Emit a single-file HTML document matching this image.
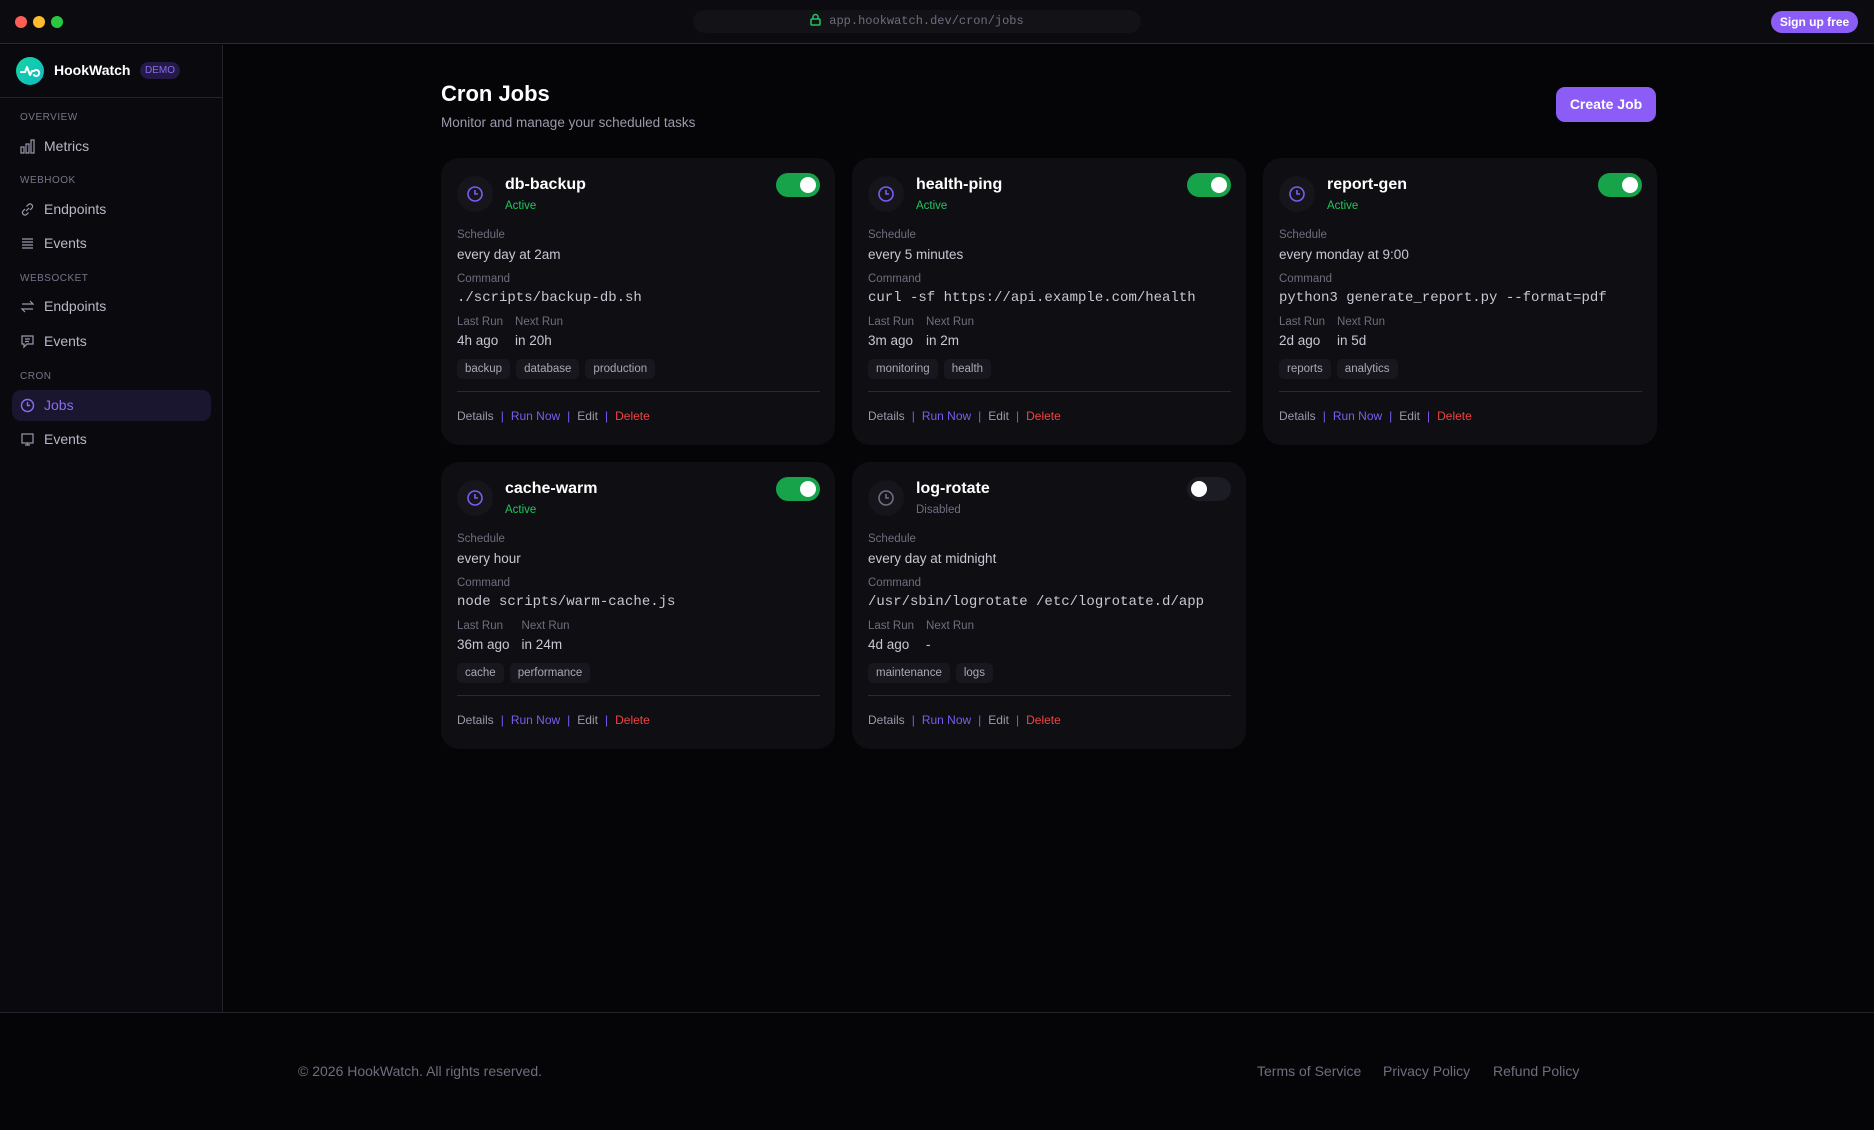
<!DOCTYPE html>
<html><head><meta charset="utf-8"><style>
*{box-sizing:border-box;margin:0;padding:0}
body{width:1874px;height:1130px;background:#050507;font-family:"Liberation Sans",sans-serif;color:#e8e8ee;position:relative;overflow:hidden}
.top{position:absolute;left:0;top:0;width:1874px;height:44px;background:#0c0c10;border-bottom:1px solid #2a2a30}
.dot{position:absolute;top:16px;width:12px;height:12px;border-radius:50%}
.url{position:absolute;left:693px;top:10px;width:448px;height:23px;border-radius:12px;background:#121217;font-family:"Liberation Mono",monospace;font-size:12px;color:#6e6e80;text-align:center;line-height:23px}
.signup{position:absolute;left:1771px;top:11px;width:87px;height:22px;border-radius:11px;background:#8b5cf6;color:#fff;font-size:12px;font-weight:bold;text-align:center;line-height:22px}
.side{position:absolute;left:0;top:45px;width:223px;height:968px;background:#0a0a0e;border-right:1px solid #222228}
.logo{position:absolute;left:16px;top:57px;width:28px;height:28px;border-radius:50%;background:linear-gradient(135deg,#14d6a0,#0fb9c6)}
.brand{position:absolute;left:54px;top:62px;font-size:14px;font-weight:bold;color:#fff}
.demo{position:absolute;left:140px;top:62px;width:40px;height:17px;border-radius:9px;background:#231a45;color:#8b6cf0;font-size:10px;text-align:center;line-height:17px}
.sdiv{position:absolute;left:0;top:97px;width:223px;height:1px;background:#24242a}
.lab{position:absolute;left:20px;font-size:10px;color:#75758a;letter-spacing:.5px}
.nav{position:absolute;left:44px;font-size:14px;color:#b8b8c6}
.ico{position:absolute;left:20px;width:15px;height:15px}
.active{position:absolute;left:12px;top:390px;width:199px;height:31px;border-radius:9px;background:#1a1630}
.foot{position:absolute;left:0;top:1012px;width:1874px;height:1px;background:#24242a}
.ft{position:absolute;top:1063px;font-size:14px;color:#6e6e80}
h1{position:absolute;left:441px;top:81px;font-size:22px;font-weight:bold;color:#fff}
.sub{position:absolute;left:441px;top:115px;font-size:13.5px;color:#9a9aac}
.create{position:absolute;left:1556px;top:87px;width:100px;height:35px;border-radius:9px;background:#8b5cf6;color:#fff;font-size:14px;font-weight:bold;text-align:center;line-height:35px}
.card{position:absolute;width:394px;height:287px;border-radius:18px;background:#0e0e13}
.card>*{position:absolute}
.ci{left:16px;top:18px;width:36px;height:36px;border-radius:50%;background:#15151b}
.ci svg{position:absolute;left:9px;top:9px}
.tt{left:64px;top:18px;font-size:16px;font-weight:bold;color:#fff}
.st{left:64px;top:42px;font-size:11.5px;color:#22c55e}
.tg{right:15px;top:15px;width:44px;height:24px;border-radius:12px;background:#16a34a}
.tg i{position:absolute;top:4px;right:4px;width:16px;height:16px;border-radius:50%;background:#fff}
.tg.off{background:#1c1c24}.tg.off i{right:auto;left:4px}
.l{font-size:11.5px;color:#6e6e80}
.v{font-size:13.5px;color:#c8c8d4}
.m{font-family:"Liberation Mono",monospace;font-size:14px;color:#c8c8d4}
.runs{left:16px;top:158px;display:flex;gap:12px}
.runs div{display:flex;flex-direction:column;gap:5px}
.tags{left:16px;top:201px;display:flex;gap:6px}
.tags span{height:20px;padding:0 8px;border-radius:5px;background:#17171d;font-size:11.5px;color:#a8a8b8;line-height:20px}
.hr{left:16px;right:15px;top:233px;height:1px;background:#2a2a32}
.act{left:16px;top:251px;font-size:12px;color:#9a9aac;white-space:nowrap}
.act b{font-weight:normal;color:#7c5cf0}.act em{font-style:normal;color:#ef4444}.act s{text-decoration:none;color:#7c5cf0;margin:0 7px}
</style></head><body>
<div class="top">
<div class="dot" style="left:15px;background:#ff5f57"></div><div class="dot" style="left:33px;background:#febc2e"></div><div class="dot" style="left:51px;background:#28c840"></div>
<div class="url"><svg width="11" height="13" viewBox="0 0 11 13" style="vertical-align:-2px;margin-right:8px"><rect x="1" y="6" width="9" height="6" rx="1" fill="none" stroke="#22c55e" stroke-width="1.5"/><path d="M3 6V4a2.5 2.5 0 0 1 5 0v2" fill="none" stroke="#22c55e" stroke-width="1.5"/></svg>app.hookwatch.dev/cron/jobs</div>
<div class="signup">Sign up free</div>
</div>
<div class="side"></div>
<div class="logo"><svg width="28" height="28" viewBox="0 0 28 28"><path d="M5 15h4l2-5 3 8 2-4h2a3 3 0 1 1 0 4" fill="none" stroke="#fff" stroke-width="2" stroke-linecap="round" stroke-linejoin="round"/></svg></div>
<div class="brand">HookWatch</div><div class="demo">DEMO</div>
<div class="sdiv"></div>
<div class="lab" style="top:112px">OVERVIEW</div>
<svg class="ico" style="top:139px" viewBox="0 0 15 15" fill="none" stroke="#9a9aac" stroke-width="1.2"><rect x="1" y="8" width="3" height="6"/><rect x="6" y="5" width="3" height="9"/><rect x="11" y="1" width="3" height="13"/></svg>
<div class="nav" style="top:138px">Metrics</div>
<div class="lab" style="top:175px">WEBHOOK</div>
<svg class="ico" style="top:202px" viewBox="0 0 15 15" fill="none" stroke="#9a9aac" stroke-width="1.2"><path d="M6 9l3-3M5 7L3 9a2.5 2.5 0 0 0 3.5 3.5L8.5 10.5M10 8l2-2A2.5 2.5 0 0 0 8.5 2.5L6.5 4.5"/></svg>
<div class="nav" style="top:201px">Endpoints</div>
<svg class="ico" style="top:236px" viewBox="0 0 15 15" fill="none" stroke="#9a9aac" stroke-width="1.2"><path d="M2 3h11M2 6h11M2 9h11M2 12h11"/></svg>
<div class="nav" style="top:235px">Events</div>
<div class="lab" style="top:273px">WEBSOCKET</div>
<svg class="ico" style="top:299px" viewBox="0 0 15 15" fill="none" stroke="#9a9aac" stroke-width="1.2"><path d="M2 5h11l-3-3M13 10H2l3 3"/></svg>
<div class="nav" style="top:298px">Endpoints</div>
<svg class="ico" style="top:334px" viewBox="0 0 15 15" fill="none" stroke="#9a9aac" stroke-width="1.2"><path d="M2 2h11v8H7l-3 3v-3H2z M5 5h5M5 7.5h4"/></svg>
<div class="nav" style="top:333px">Events</div>
<div class="lab" style="top:371px">CRON</div>
<div class="active"></div>
<svg class="ico" style="top:398px" viewBox="0 0 15 15" fill="none" stroke="#8b6cf0" stroke-width="1.4"><circle cx="7.5" cy="7.5" r="6"/><path d="M7.5 4v3.5h2.5"/></svg>
<div class="nav" style="top:397px;color:#8b6cf0">Jobs</div>
<svg class="ico" style="top:432px" viewBox="0 0 15 15" fill="none" stroke="#9a9aac" stroke-width="1.2"><rect x="2" y="2" width="11" height="9"/><path d="M5 13h5M7.5 11v2"/></svg>
<div class="nav" style="top:431px">Events</div>

<h1>Cron Jobs</h1>
<div class="sub">Monitor and manage your scheduled tasks</div>
<div class="create">Create Job</div>

<div class="card" style="left:441px;top:158px">
<div class="ci"><svg width="18" height="18" viewBox="0 0 18 18" fill="none" stroke="#7c5cf0" stroke-width="1.6"><circle cx="9" cy="9" r="7"/><path d="M9 5v4h3"/></svg></div>
<div class="tt">db-backup</div><div class="st">Active</div><div class="tg"><i></i></div>
<div class="l" style="left:16px;top:71px">Schedule</div><div class="v" style="left:16px;top:89px">every day at 2am</div>
<div class="l" style="left:16px;top:115px">Command</div><div class="m" style="left:16px;top:132px">./scripts/backup-db.sh</div>
<div class="runs"><div><span class="l">Last Run</span><span class="v">4h ago</span></div><div><span class="l">Next Run</span><span class="v">in 20h</span></div></div>
<div class="tags"><span>backup</span><span>database</span><span>production</span></div>
<div class="hr"></div>
<div class="act">Details<s>|</s><b>Run Now</b><s>|</s>Edit<s>|</s><em>Delete</em></div>
</div>

<div class="card" style="left:852px;top:158px">
<div class="ci"><svg width="18" height="18" viewBox="0 0 18 18" fill="none" stroke="#7c5cf0" stroke-width="1.6"><circle cx="9" cy="9" r="7"/><path d="M9 5v4h3"/></svg></div>
<div class="tt">health-ping</div><div class="st">Active</div><div class="tg"><i></i></div>
<div class="l" style="left:16px;top:71px">Schedule</div><div class="v" style="left:16px;top:89px">every 5 minutes</div>
<div class="l" style="left:16px;top:115px">Command</div><div class="m" style="left:16px;top:132px">curl -sf https://api.example.com/health</div>
<div class="runs"><div><span class="l">Last Run</span><span class="v">3m ago</span></div><div><span class="l">Next Run</span><span class="v">in 2m</span></div></div>
<div class="tags"><span>monitoring</span><span>health</span></div>
<div class="hr"></div>
<div class="act">Details<s>|</s><b>Run Now</b><s>|</s>Edit<s>|</s><em>Delete</em></div>
</div>

<div class="card" style="left:1263px;top:158px">
<div class="ci"><svg width="18" height="18" viewBox="0 0 18 18" fill="none" stroke="#7c5cf0" stroke-width="1.6"><circle cx="9" cy="9" r="7"/><path d="M9 5v4h3"/></svg></div>
<div class="tt">report-gen</div><div class="st">Active</div><div class="tg"><i></i></div>
<div class="l" style="left:16px;top:71px">Schedule</div><div class="v" style="left:16px;top:89px">every monday at 9:00</div>
<div class="l" style="left:16px;top:115px">Command</div><div class="m" style="left:16px;top:132px">python3 generate_report.py --format=pdf</div>
<div class="runs"><div><span class="l">Last Run</span><span class="v">2d ago</span></div><div><span class="l">Next Run</span><span class="v">in 5d</span></div></div>
<div class="tags"><span>reports</span><span>analytics</span></div>
<div class="hr"></div>
<div class="act">Details<s>|</s><b>Run Now</b><s>|</s>Edit<s>|</s><em>Delete</em></div>
</div>

<div class="card" style="left:441px;top:462px">
<div class="ci"><svg width="18" height="18" viewBox="0 0 18 18" fill="none" stroke="#7c5cf0" stroke-width="1.6"><circle cx="9" cy="9" r="7"/><path d="M9 5v4h3"/></svg></div>
<div class="tt">cache-warm</div><div class="st">Active</div><div class="tg"><i></i></div>
<div class="l" style="left:16px;top:71px">Schedule</div><div class="v" style="left:16px;top:89px">every hour</div>
<div class="l" style="left:16px;top:115px">Command</div><div class="m" style="left:16px;top:132px">node scripts/warm-cache.js</div>
<div class="runs"><div><span class="l">Last Run</span><span class="v">36m ago</span></div><div><span class="l">Next Run</span><span class="v">in 24m</span></div></div>
<div class="tags"><span>cache</span><span>performance</span></div>
<div class="hr"></div>
<div class="act">Details<s>|</s><b>Run Now</b><s>|</s>Edit<s>|</s><em>Delete</em></div>
</div>

<div class="card" style="left:852px;top:462px">
<div class="ci"><svg width="18" height="18" viewBox="0 0 18 18" fill="none" stroke="#6e6e80" stroke-width="1.6"><circle cx="9" cy="9" r="7"/><path d="M9 5v4h3"/></svg></div>
<div class="tt">log-rotate</div><div class="st" style="color:#6e6e80">Disabled</div><div class="tg off"><i></i></div>
<div class="l" style="left:16px;top:71px">Schedule</div><div class="v" style="left:16px;top:89px">every day at midnight</div>
<div class="l" style="left:16px;top:115px">Command</div><div class="m" style="left:16px;top:132px">/usr/sbin/logrotate /etc/logrotate.d/app</div>
<div class="runs"><div><span class="l">Last Run</span><span class="v">4d ago</span></div><div><span class="l">Next Run</span><span class="v">-</span></div></div>
<div class="tags"><span>maintenance</span><span>logs</span></div>
<div class="hr"></div>
<div class="act">Details<s>|</s><b>Run Now</b><s>|</s>Edit<s>|</s><em>Delete</em></div>
</div>

<div class="foot"></div>
<div class="ft" style="left:298px">© 2026 HookWatch. All rights reserved.</div>
<div class="ft" style="left:1257px">Terms of Service</div>
<div class="ft" style="left:1383px">Privacy Policy</div>
<div class="ft" style="left:1493px">Refund Policy</div>
</body></html>
